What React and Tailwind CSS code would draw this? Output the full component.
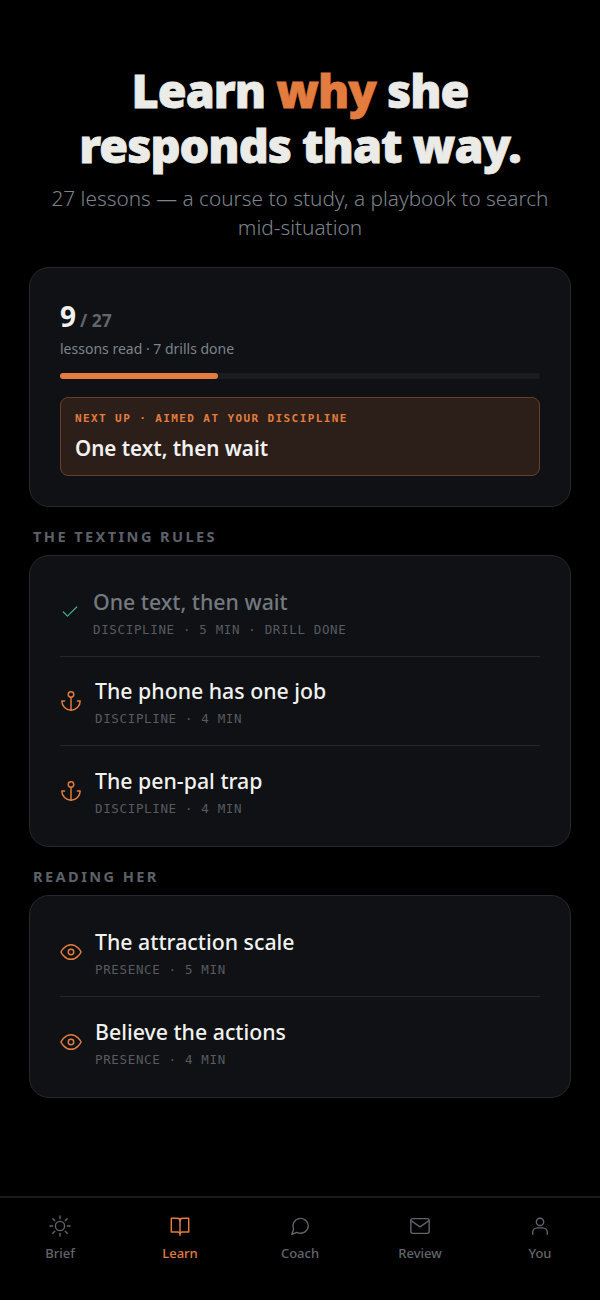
import React from "react";

const sans = "font-['Noto_Sans','Open_Sans',sans-serif]";
const mono = "font-['DejaVu_Sans_Mono','Liberation_Mono',monospace]";

function Ico({ size = 22, sw = 1.6, children, className = "" }) {
  return (
    <svg width={size} height={size} viewBox="0 0 24 24" fill="none" stroke="currentColor" strokeWidth={sw} strokeLinecap="round" strokeLinejoin="round" className={className}>
      {children}
    </svg>
  );
}

const AnchorI = () => (
  <Ico className="text-[#e27d3f]">
    <circle cx="12" cy="5" r="3" />
    <path d="M12 8v14" />
    <path d="M5 12H2a10 10 0 0 0 20 0h-3" />
  </Ico>
);
const EyeI = () => (
  <Ico className="text-[#e27d3f]">
    <path d="M1 12s4-8 11-8 11 8 11 8-4 8-11 8-11-8-11-8z" />
    <circle cx="12" cy="12" r="3" />
  </Ico>
);
const CheckI = () => (
  <Ico size={20} sw={1.5} className="text-[#3fae7e]">
    <path d="M20 6 9 17l-5-5" />
  </Ico>
);

function Row({ icon, title, meta, done, last }) {
  return (
    <div className={`flex items-center gap-[13px] h-[89px] ${last ? "" : "border-b border-[#24272b]"}`}>
      <div className="shrink-0 flex">{icon}</div>
      <div className="flex flex-col pt-[2px]">
        <div className={`text-[21.3px] leading-[30px] font-medium ${done ? "text-[#74797f]" : "text-[#f1f1ef]"}`}>{title}</div>
        <div className={`${mono} text-[12.5px] leading-[18px] tracking-[0.65px] text-[#585b60] mt-[4px]`}>{meta}</div>
      </div>
    </div>
  );
}

function Tab({ icon, label, active }) {
  return (
    <div className={`flex-1 flex flex-col items-center gap-[7px] ${active ? "text-[#e27d3f]" : "text-[#62666b]"}`}>
      {icon}
      <span className="text-[13px] leading-[18px] font-medium">{label}</span>
    </div>
  );
}

const labelCls = "mt-[19px] mb-[9px] pl-[4px] text-[14.6px] leading-[20px] font-bold tracking-[2.4px] text-[#5d6268]";
const cardCls = "rounded-[20px] border border-[#25282c] bg-[#0f1114] px-[30px] pt-[12px] pb-[11px]";

export default function App() {
  return (
    <div className={`${sans} bg-black w-[600px] h-[1300px] flex flex-col overflow-hidden`}>
      <div className="flex-1 px-[29px] pt-[63px]">
        <h1 className="text-[46.8px] leading-[55px] font-black text-center text-[#ebebe8] tracking-[-1px] [-webkit-text-stroke-width:0.8px]">
          Learn <span className="text-[#e27d3f]">why</span> she<br />responds that way.
        </h1>
        <p className="text-[20.8px] leading-[29px] text-center text-[#7d848b] mt-[11px] font-light">
          27 lessons — a course to study, a playbook to search mid-situation
        </p>
        <div className="mt-[25px] h-[240px] rounded-[20px] border border-[#25282c] bg-[#0f1114] px-[30px] pt-[29px]">
          <div className="flex items-baseline gap-[4px]">
            <span className="text-[28px] leading-[38px] font-bold text-[#f1f1ef]">9</span>
            <span className="text-[17.5px] font-bold text-[#62666b]">/ 27</span>
          </div>
          <div className="mt-[4px] text-[14px] leading-[20px] text-[#7d848b]">lessons read · 7 drills done</div>
          <div className="mt-[14px] h-[6px] rounded-full bg-[#1a1c20]">
            <div className="h-full w-[33%] rounded-full bg-[#e27d3f]"></div>
          </div>
          <div className="mt-[18px] h-[79px] rounded-[8px] border border-[#6b3d24] bg-[#2c1f1a] px-[14px] pt-[12px]">
            <div className={`${mono} text-[11px] leading-[18px] font-bold tracking-[1.4px] text-[#e27d3f]`}>NEXT UP · AIMED AT YOUR DISCIPLINE</div>
            <div className="text-[20.6px] leading-[30px] font-semibold text-[#f1f1ef] mt-[5px]">One text, then wait</div>
          </div>
        </div>
        <div className={labelCls}>THE TEXTING RULES</div>
        <div className={cardCls}>
          <Row done icon={<CheckI />} title="One text, then wait" meta="DISCIPLINE · 5 MIN · DRILL DONE" />
          <Row icon={<AnchorI />} title="The phone has one job" meta="DISCIPLINE · 4 MIN" />
          <Row last icon={<AnchorI />} title="The pen-pal trap" meta="DISCIPLINE · 4 MIN" />
        </div>
        <div className={labelCls}>READING HER</div>
        <div className={cardCls}>
          <Row icon={<EyeI />} title="The attraction scale" meta="PRESENCE · 5 MIN" />
          <Row last icon={<EyeI />} title="Believe the actions" meta="PRESENCE · 4 MIN" />
        </div>
      </div>
      <div className="h-[104px] border-t-2 border-[#1c1c1e] bg-black flex pt-[17px]">
        <Tab label="Brief" icon={
          <Ico sw={1.5}>
            <circle cx="12" cy="12" r="5" />
            <path d="M12 1v3M12 20v3M4.200 4.200l2.100 2.100M17.700 17.700l2.100 2.100M1 12h3M20 12h3M4.200 19.800l2.100-2.100M17.700 6.300l2.100-2.100" />
          </Ico>} />
        <Tab active label="Learn" icon={
          <Ico>
            <path d="M2.500 3.500H9c2 0 3 1 3 3 0-2 1-3 3-3h6.500v15H14.500c-1.500 0-2.500.8-2.500 2-0-1.200-1-2-2.500-2h-7z" />
            <path d="M12 6.500V22" />
          </Ico>} />
        <Tab label="Coach" icon={
          <Ico sw={1.5}>
            <path d="M21 11.500a8.400 8.400 0 0 1-12.300 7.400L3 21l2-5.400A8.400 8.400 0 1 1 21 11.500z" />
          </Ico>} />
        <Tab label="Review" icon={
          <Ico sw={1.5}>
            <rect x="2" y="4" width="20" height="16" rx="2" />
            <path d="m2 6 10 7 10-7" />
          </Ico>} />
        <Tab label="You" icon={
          <Ico sw={1.5}>
            <circle cx="12" cy="7.500" r="4" />
            <path d="M4 21v-2a5 5 0 0 1 5-5h6a5 5 0 0 1 5 5v2" />
          </Ico>} />
      </div>
    </div>
  );
}
